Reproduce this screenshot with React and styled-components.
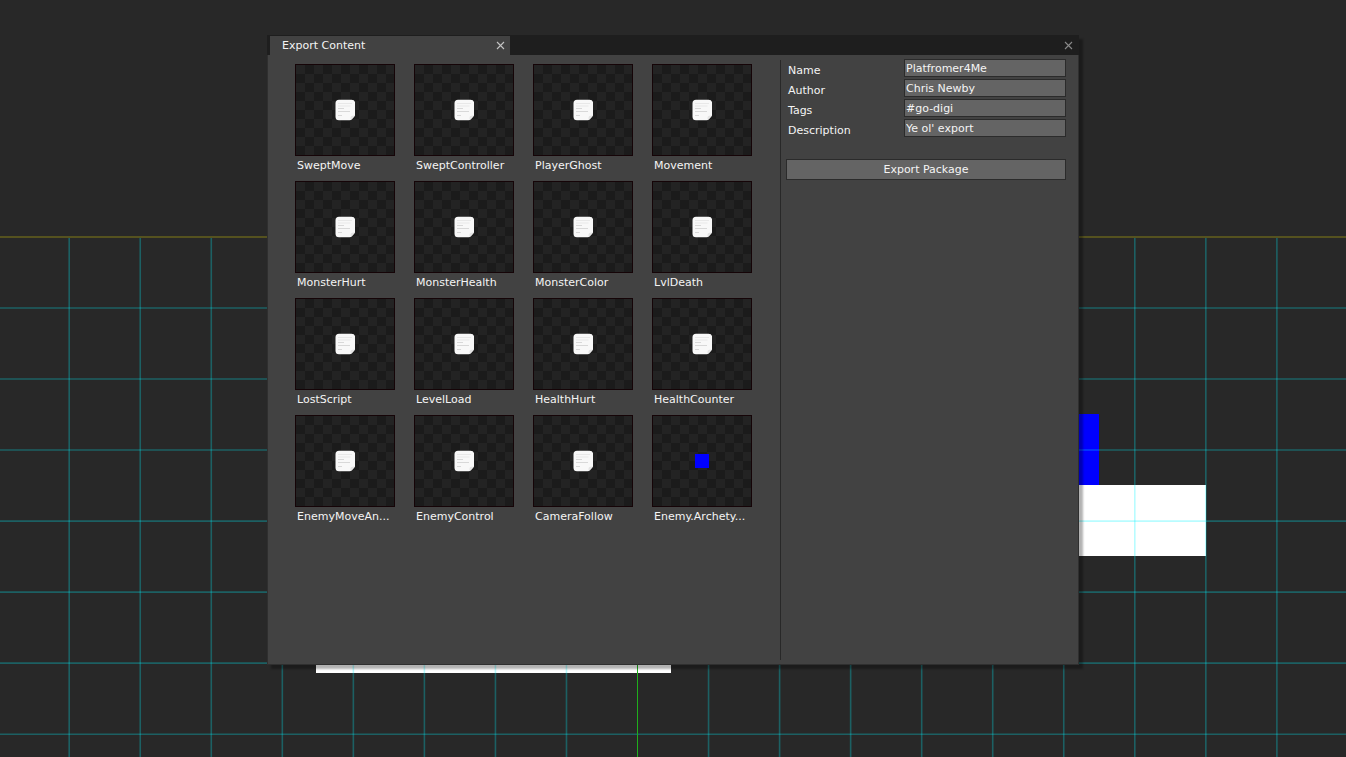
import React from "react";
import styled, { createGlobalStyle } from "styled-components";

const GlobalStyle = createGlobalStyle`
  *, *::before, *::after { box-sizing: border-box; }
  body {
    margin: 0;
    background: #282828;
    color: #f4f4f4;
    font: 11px/16px "DejaVu Sans", sans-serif;
  }
`;

const Editor = styled.div`
  position: relative;
  min-height: 100vh;
  overflow: hidden;
  padding: 35px 267px 92px;
  display: flex;
`;

const Scene = styled.svg`
  position: absolute;
  top: 0;
  left: 0;
  width: 100%;
  height: 100%;
`;

const Window = styled.main`
  position: relative;
  flex: 1;
  display: flex;
  flex-direction: column;
  background: #424242;
  border: 1px solid #2f2f2f;
  border-top: 0;
  box-shadow: 4px 4px 2px rgba(0, 0, 0, 0.3);
`;

const TitleBar = styled.header`
  height: 20px;
  margin: 0 -1px;
  padding: 1px 6px 0 3px;
  display: flex;
  justify-content: space-between;
  background: #1e1e1e;
`;

const Tab = styled.div`
  width: 240px;
  padding: 0 5px 0 12px;
  display: flex;
  align-items: center;
  justify-content: space-between;
  background: #424242;
`;

const TabTitle = styled.h1`
  margin: 0;
  font-size: 11px;
  font-weight: 400;
  line-height: 18px;
`;

const CloseButton = styled.button`
  width: 9px;
  padding: 0;
  border: 0;
  background: none;
  display: flex;
  align-items: center;
  color: ${(p) => p.$tone};
`;

const Body = styled.div`
  flex: 1;
  display: flex;
  padding: 5px 3px 4px 0;
`;

const Assets = styled.ul`
  flex: 1;
  margin: 0;
  padding: 4px 0 0 27px;
  list-style: none;
  display: grid;
  grid-template-columns: repeat(auto-fill, 100px);
  align-content: start;
  gap: 7px 19px;
`;

const Asset = styled.li`
  height: 110px;
`;

const Thumb = styled.div`
  height: 92px;
  border: 1px solid #150407;
  display: flex;
  align-items: center;
  justify-content: center;
  background: repeating-conic-gradient(#1b1b1b 0 25%, #232323 0 50%) 0 0 / 18px 18px;
`;

const AssetName = styled.div`
  padding: 2px 2px 0;
  line-height: 16px;
  white-space: nowrap;
`;

const Swatch = styled.div`
  width: 14px;
  height: 14px;
  background: #0000ff;
`;

const Details = styled.form`
  width: 295px;
  padding: 0 9px 0 5px;
  border-left: 1px solid #282828;
`;

const Field = styled.div`
  height: 20px;
  display: flex;
  align-items: flex-start;
  justify-content: space-between;
  padding-left: 2px;
`;

const Label = styled.label`
  padding-top: 3px;
`;

const TextInput = styled.input`
  width: 162px;
  height: 18px;
  margin-top: -1px;
  padding: 0 1px;
  border: 1px solid #2b2b2b;
  border-radius: 0;
  background: #646464;
  color: #f4f4f4;
  font: inherit;
`;

const ExportButton = styled.button`
  display: block;
  width: 100%;
  height: 21px;
  margin-top: 19px;
  padding: 0;
  border: 1px solid #2b2b2b;
  background: #646464;
  color: #f4f4f4;
  font: inherit;
`;

const Cross = () => (
  <svg width="9" height="9" viewBox="0 0 9 9" aria-hidden="true">
    <path d="M1 1 8 8M8 1 1 8" stroke="currentColor" strokeWidth="1.1" />
  </svg>
);

const ScriptIcon = () => (
  <svg width="20" height="22" viewBox="0 0 20 22" aria-hidden="true">
    <path
      d="M4 .7h12.500A3.700 3.700 0 0 1 20.200 4.400V15.500Q20 17 19 18L17 20.200Q16 21.300 14.500 21.300H4A3.500 3.500 0 0 1 .5 17.800V4.200A3.500 3.500 0 0 1 4 .7Z"
      fill="#f8f8f8"
    />
    <path d="M19.800 16.500 15.500 21V18.800A2 2 0 0 1 17.500 16.800Z" fill="#e4e4e4" />
    <path d="M3 4.500h14M3 7h12.500" stroke="#e8e8e8" />
    <path d="M3 9.500h6M3 12.500h12M3 16.500h4" stroke="#d8d8d8" />
  </svg>
);

const columns = Array.from({ length: 18 }, (_, i) => 69.2 + i * 71.04).filter((_, i) => i !== 8);
const rows = Array.from({ length: 7 }, (_, i) => 308 + i * 71.03);

const Backdrop = () => (
  <Scene aria-hidden="true">
    <rect x="1028" y="414" width="71" height="71" fill="#0000ff" />
    <rect x="993" y="485" width="213" height="71" fill="#ffffff" />
    <rect x="316" y="602" width="355" height="71" fill="#ffffff" />
    <g stroke="#00f6ff" strokeOpacity="0.28" strokeWidth="1.6">
      {columns.map((x) => (
        <line key={x} x1={x} x2={x} y1="237" y2="100%" />
      ))}
      {rows.map((y) => (
        <line key={y} x1="0" x2="100%" y1={y} y2={y} />
      ))}
    </g>
    <line x1="0" x2="100%" y1="237" y2="237" stroke="#55521f" strokeWidth="2" />
    <line x1="637.5" x2="637.5" y1="237" y2="100%" stroke="#1fae1c" />
  </Scene>
);

const scripts = [
  "SweptMove", "SweptController", "PlayerGhost", "Movement",
  "MonsterHurt", "MonsterHealth", "MonsterColor", "LvlDeath",
  "LostScript", "LevelLoad", "HealthHurt", "HealthCounter",
  "EnemyMoveAn...", "EnemyControl", "CameraFollow",
];

const fields = [
  ["name", "Name", "Platfromer4Me"],
  ["author", "Author", "Chris Newby"],
  ["tags", "Tags", "#go-digi"],
  ["description", "Description", "Ye ol' export"],
];

export default function App() {
  return (
    <Editor>
      <GlobalStyle />
      <Backdrop />
      <Window>
        <TitleBar>
          <Tab>
            <TabTitle>Export Content</TabTitle>
            <CloseButton type="button" aria-label="Close tab" $tone="#c4c4c4"><Cross /></CloseButton>
          </Tab>
          <CloseButton type="button" aria-label="Close window" $tone="#8a8a8a"><Cross /></CloseButton>
        </TitleBar>
        <Body>
          <Assets>
            {scripts.map((name) => (
              <Asset key={name}>
                <Thumb><ScriptIcon /></Thumb>
                <AssetName>{name}</AssetName>
              </Asset>
            ))}
            <Asset>
              <Thumb><Swatch /></Thumb>
              <AssetName>Enemy.Archety...</AssetName>
            </Asset>
          </Assets>
          <Details onSubmit={(e) => e.preventDefault()}>
            {fields.map(([id, label, value]) => (
              <Field key={id}>
                <Label htmlFor={id}>{label}</Label>
                <TextInput id={id} defaultValue={value} />
              </Field>
            ))}
            <ExportButton type="submit">Export Package</ExportButton>
          </Details>
        </Body>
      </Window>
    </Editor>
  );
}
